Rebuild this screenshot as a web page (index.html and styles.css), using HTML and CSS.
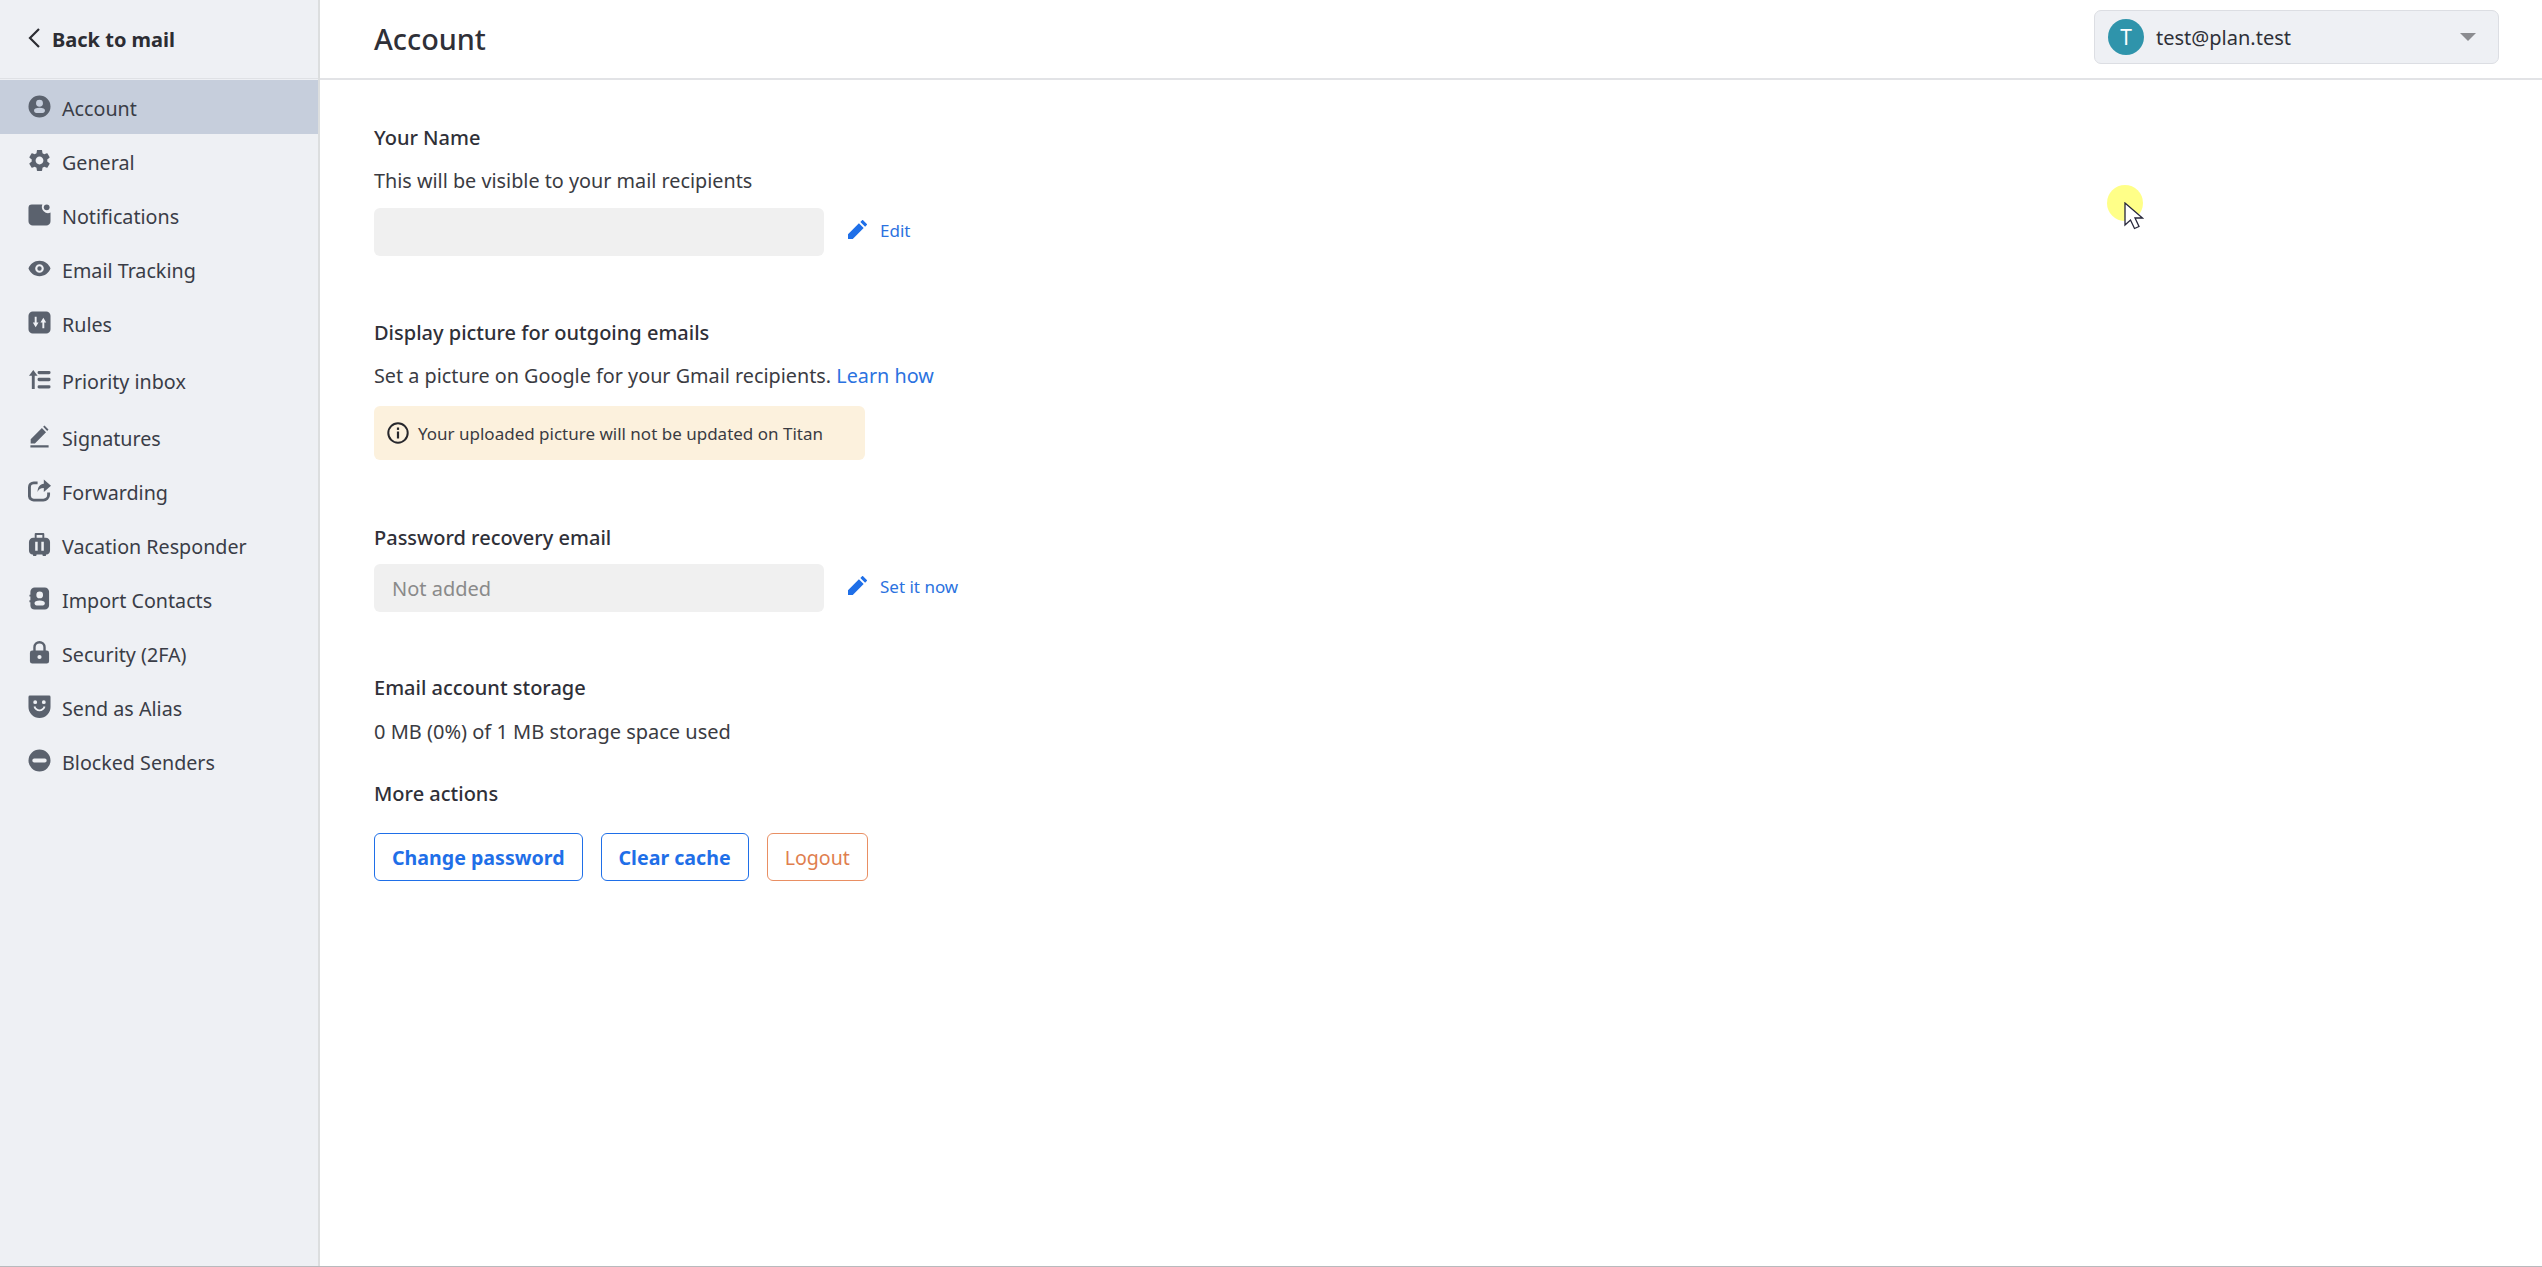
FILE: index.html
```html
<!DOCTYPE html>
<html lang="en">
<head>
<meta charset="utf-8">
<title>Account</title>
<link rel="stylesheet" href="styles.css">
</head>
<body>
<div class="app">
  <aside class="sidebar">
    <a class="back">
      <svg class="back-icon" viewBox="0 0 14 22"><path d="M12 2 3 11l9 9" fill="none" stroke="currentColor" stroke-width="2.2"/></svg>
      <span>Back to mail</span>
    </a>
    <nav class="nav">
      <a class="nav-item active"><svg class="ico" viewBox="0 0 24 24"><path fill-rule="evenodd" d="M12 .5a11.500 11.500 0 1 0 0 23 11.500 11.500 0 0 0 0-23zm0 4.500a3.600 3.600 0 1 1 0 7.200 3.600 3.600 0 0 1 0-7.200zM6.300 16.300c0-2 2-3 5.700-3s5.700 1 5.700 3c0 1.500-1 2.500-2.500 2.500H8.800c-1.500 0-2.500-1-2.500-2.500z"/></svg><span>Account</span></a>
      <a class="nav-item"><svg class="ico" viewBox="0 0 24 24"><path transform="translate(-1.600 -1.600) scale(1.133)" d="M19.140 12.940c.04-.3.06-.61.06-.94 0-.32-.02-.64-.07-.94l2.030-1.580c.18-.14.23-.41.12-.61l-1.920-3.320c-.12-.22-.37-.29-.59-.22l-2.390.96c-.5-.38-1.030-.7-1.620-.94l-.36-2.540c-.04-.24-.24-.41-.48-.41h-3.840c-.24 0-.43.17-.47.41l-.36 2.540c-.59.24-1.130.57-1.620.94l-2.390-.96c-.22-.08-.47 0-.59.22L2.740 8.870c-.12.21-.08.47.12.61l2.030 1.580c-.05.3-.09.63-.09.94s.02.64.07.94l-2.030 1.580c-.18.14-.23.41-.12.61l1.920 3.320c.12.22.37.29.59.22l2.390-.96c.5.38 1.030.7 1.620.94l.36 2.540c.05.24.24.41.48.41h3.840c.24 0 .44-.17.47-.41l.36-2.540c.59-.24 1.130-.56 1.620-.94l2.390.96c.22.08.47 0 .59-.22l1.920-3.320c.12-.22.07-.47-.12-.61l-2.010-1.580zM12 15.600c-1.980 0-3.600-1.620-3.600-3.600s1.620-3.600 3.600-3.600 3.600 1.620 3.600 3.600-1.620 3.600-3.600 3.600z"/></svg><span>General</span></a>
      <a class="nav-item"><svg class="ico" viewBox="0 0 24 24"><path d="M4 1.500h11a6.500 6.500 0 0 0 8.500 8.500V19a4.500 4.500 0 0 1-4.500 4.500H5A4.500 4.500 0 0 1 .5 19V5A3.500 3.500 0 0 1 4 1.500z"/><circle cx="19.500" cy="4.500" r="3"/></svg><span>Notifications</span></a>
      <a class="nav-item"><svg class="ico" viewBox="0 0 24 24"><path fill-rule="evenodd" d="M12 4C6.500 4 2.200 7.500.5 12c1.700 4.500 6 8 11.500 8s9.800-3.500 11.500-8C21.800 7.500 17.500 4 12 4zm0 3.500a4.500 4.500 0 1 1 0 9 4.500 4.500 0 0 1 0-9zm0 2.200a2.300 2.300 0 1 0 0 4.600 2.300 2.300 0 0 0 0-4.600z"/></svg><span>Email Tracking</span></a>
      <a class="nav-item"><svg class="ico" viewBox="0 0 24 24"><path fill-rule="evenodd" d="M5 .5h14A4.500 4.500 0 0 1 23.500 5v14a4.500 4.500 0 0 1-4.500 4.500H5A4.500 4.500 0 0 1 .5 19V5A4.500 4.500 0 0 1 5 .5zM7 6v6H5l3 5 3-5H9V6H7zm8 12h2v-6h2l-3-5-3 5h2v6z"/></svg><span>Rules</span></a>
      <a class="nav-item tall"><svg class="ico" viewBox="0 0 24 24"><path d="M5.500 2 10 8H7v14H4V8H1l4.500-6z"/><rect x="10" y="3" width="13.500" height="3.400" rx="1.500"/><rect x="10" y="10.300" width="13.500" height="3.400" rx="1.500"/><rect x="10" y="18" width="13.500" height="3.400" rx="1.500"/></svg><span>Priority inbox</span></a>
      <a class="nav-item"><svg class="ico" viewBox="0 0 24 24"><path d="M2.500 21.200h19V23.500h-19zM2.800 19.200v-4.400L14.500 3.200l4.300 4.300L7.200 19.200zM15.800 1.900l1.400-1.400 4.200 4.200-1.400 1.500z"/></svg><span>Signatures</span></a>
      <a class="nav-item"><svg class="ico" viewBox="0 0 24 24"><path fill="none" stroke="currentColor" stroke-width="3" d="M10 4H6a4.500 4.500 0 0 0-4.500 4.500V18A4.500 4.500 0 0 0 6 22h10a5.500 5.500 0 0 0 5.500-5.500V14"/><path d="M16.500.5 24 7l-7.500 6.500V9.500c-3.500 0-5.500 1.500-6.500 4 0-5 2.500-8 6.500-8.500z"/></svg><span>Forwarding</span></a>
      <a class="nav-item"><svg class="ico" viewBox="0 0 24 24"><path fill-rule="evenodd" d="M8 0h8a1 1 0 0 1 1 1v4h1.500a4.500 4.500 0 0 1 4.500 4.500V18a4.500 4.500 0 0 1-4 4.500l-.5 1.500h-3l-.5-1.500H9L8.500 24h-3L5 22.500A4.500 4.500 0 0 1 1 18V9.500A4.500 4.500 0 0 1 5.500 5H7V1a1 1 0 0 1 1-1zm1 2v3h6V2H9zM7.500 9v9.500h2.600V9H7.500zm6.400 0v9.500h2.600V9h-2.600z"/></svg><span>Vacation Responder</span></a>
      <a class="nav-item"><svg class="ico" viewBox="0 0 24 24"><path fill-rule="evenodd" d="M7 .5h10.500A4.500 4.500 0 0 1 22 5v14a4.500 4.500 0 0 1-4.500 4.500H7A4.500 4.500 0 0 1 2.500 19.200V16H1.500v-2.200h1V10h-1V8h1V5A4.500 4.500 0 0 1 7 .5zm5.200 4.300a3.500 3.500 0 1 0 0 7 3.500 3.500 0 0 0 0-7zM6.800 17c0-2 2-3 5.400-3s5.400 1 5.400 3c0 1.300-.9 2.200-2.200 2.200H9c-1.300 0-2.200-.9-2.200-2.200z"/></svg><span>Import Contacts</span></a>
      <a class="nav-item"><svg class="ico" viewBox="0 0 24 24"><path fill-rule="evenodd" d="M12 0a6.500 6.500 0 0 1 6.500 6.500V10h1a2.500 2.500 0 0 1 2.500 2.500V21a2.500 2.500 0 0 1-2.500 2.500h-15A2.500 2.500 0 0 1 2 21v-8.500A2.500 2.500 0 0 1 4.500 10h1V6.500A6.500 6.500 0 0 1 12 0zm0 2.500a4 4 0 0 0-4 4V10h8V6.500a4 4 0 0 0-4-4zm0 12a2.200 2.200 0 1 0 0 4.400 2.200 2.200 0 0 0 0-4.400z"/></svg><span>Security (2FA)</span></a>
      <a class="nav-item"><svg class="ico" viewBox="0 0 24 24"><path fill-rule="evenodd" d="M2 .5h20A1.500 1.500 0 0 1 23.500 2v10.500A11.500 11.500 0 0 1 .5 12.500V2A1.500 1.500 0 0 1 2 .5zM7.500 5.500a2 2 0 1 0 0 4 2 2 0 0 0 0-4zm9 0a2 2 0 1 0 0 4 2 2 0 0 0 0-4zM5.800 12.300c1 3 3.300 4.700 6.200 4.700s5.200-1.700 6.200-4.700l-1.900-.6c-.7 2.200-2.300 3.300-4.300 3.300s-3.600-1.100-4.300-3.300z"/></svg><span>Send as Alias</span></a>
      <a class="nav-item"><svg class="ico" viewBox="0 0 24 24"><path fill-rule="evenodd" d="M12 .5a11.500 11.500 0 1 0 0 23 11.500 11.500 0 0 0 0-23zM6.500 10h11a2 2 0 0 1 0 4h-11a2 2 0 0 1 0-4z"/></svg><span>Blocked Senders</span></a>
    </nav>
  </aside>

  <div class="main">
    <header class="topbar">
      <h1 class="title">Account</h1>
      <div class="account-select">
        <span class="avatar">T</span>
        <span class="account-email">test@plan.test</span>
        <span class="caret"></span>
      </div>
    </header>

    <main class="content">
      <section class="block block-name">
        <h2 class="heading">Your Name</h2>
        <p class="text">This will be visible to your mail recipients</p>
        <div class="field-row">
          <div class="field"></div>
          <a class="edit"><svg class="pencil" viewBox="0 0 20 20"><path d="M0 20v-5L11.500 3.500l5 5L5 20zM13 2l1.800-1.800a.8.8 0 0 1 1.100 0l3.900 3.900a.8.8 0 0 1 0 1.100L18 7z"/></svg><span>Edit</span></a>
        </div>
      </section>

      <section class="block block-picture">
        <h2 class="heading">Display picture for outgoing emails</h2>
        <p class="text">Set a picture on Google for your Gmail recipients. <a class="link">Learn how</a></p>
        <div class="notice">
          <svg class="info" viewBox="0 0 22 22"><circle cx="11" cy="11" r="9.700" fill="none" stroke="currentColor" stroke-width="2"/><rect x="9.900" y="9.500" width="2.200" height="7"/><rect x="9.900" y="5.500" width="2.200" height="2.400"/></svg>
          <span>Your uploaded picture will not be updated on Titan</span>
        </div>
      </section>

      <section class="block block-recovery">
        <h2 class="heading">Password recovery email</h2>
        <div class="field-row field-row-tight">
          <div class="field field-muted">Not added</div>
          <a class="edit"><svg class="pencil" viewBox="0 0 20 20"><path d="M0 20v-5L11.500 3.500l5 5L5 20zM13 2l1.800-1.800a.8.8 0 0 1 1.100 0l3.900 3.900a.8.8 0 0 1 0 1.100L18 7z"/></svg><span>Set it now</span></a>
        </div>
      </section>

      <section class="block block-storage">
        <h2 class="heading">Email account storage</h2>
        <p class="text">0 MB (0%) of 1 MB storage space used</p>
      </section>

      <section class="block block-actions">
        <h2 class="heading">More actions</h2>
        <div class="actions">
          <button class="btn">Change password</button>
          <button class="btn">Clear cache</button>
          <button class="btn btn-danger">Logout</button>
        </div>
      </section>
    </main>
  </div>
</div>

<div class="pointer">
  <svg class="pointer-arrow" viewBox="0 0 20 28"><path d="M1 1v22l5.500-5 4 8.500 4.500-2-4-8.500h7.500z" fill="#fff" stroke="#26263a" stroke-width="1.300"/></svg>
</div>
</body>
</html>
```

FILE: styles.css
```css
* { box-sizing: border-box; }
html, body { height: 100%; }
body {
  margin: 0;
  background: #fff;
  color: #2f3038;
  font-family: "Noto Sans", "Open Sans", sans-serif;
  font-size: 19.800px;
  overflow: hidden;
}
.app {
  display: flex;
  height: 1267px;
  border-bottom: 1px solid #b8babd;
}
.sidebar {
  width: 320px;
  flex: none;
  background: #eef0f4;
  border-right: 2px solid #dcdedf;
}
.back {
  display: flex;
  align-items: center;
  gap: 11px;
  height: 79px;
  padding-left: 27px;
  border-bottom: 1px solid #dfe1e5;
  font-weight: 700;
  font-size: 20px;
  color: #2c2d33;
}
.back-icon { width: 14px; height: 22px; margin-top: -3px; }
.nav { display: flex; flex-direction: column; padding-top: 1px; }
.nav-item {
  display: flex;
  align-items: center;
  gap: 11px;
  height: 54px;
  padding: 2px 0 0 28px;
  font-size: 19.700px;
  color: #3a3d47;
}
.nav-item.tall { height: 60px; }
.nav-item.active { background: #c6cedc; }
.ico {
  width: 23px;
  height: 23px;
  flex: none;
  margin-top: -3px;
  fill: #5b626e;
  color: #5b626e;
}
.main { flex: 1; min-width: 0; }
.topbar {
  display: flex;
  align-items: center;
  justify-content: space-between;
  height: 80px;
  padding: 0 43px 0 54px;
  border-bottom: 2px solid #e2e3e6;
}
.title { margin: 0 0 1px; font-size: 28.800px; font-weight: 500; color: #2f3038; }
.account-select {
  display: flex;
  align-items: center;
  width: 405px;
  height: 54px;
  margin-top: -5px;
  padding: 0 22px 0 13px;
  background: #eef0f4;
  border: 1px solid #dcdee3;
  border-radius: 7px;
}
.avatar {
  display: flex;
  align-items: center;
  justify-content: center;
  width: 36px;
  height: 36px;
  border-radius: 50%;
  background: #2f94ab;
  color: #fff;
  font-size: 21px;
}
.account-email { flex: 1; margin: 2px 0 0 12px; font-size: 20px; }
.caret {
  width: 0;
  height: 0;
  border-left: 8px solid transparent;
  border-right: 8px solid transparent;
  border-top: 8px solid #8b8c90;
}
.content { padding: 0 0 0 54px; }
.block { display: flex; flex-direction: column; align-items: flex-start; }
.heading { margin: 0; font-size: 20px; font-weight: 500; line-height: 28px; color: #2f3038; }
.text { margin: 0; line-height: 28px; color: #3a3b42; }
.link { color: #2b72e0; }
.block-name { padding-top: 44px; }
.block-name .text { margin-top: 15px; }
.field-row { display: flex; align-items: center; margin-top: 13px; }
.field-row-tight { margin-top: 12px; }
.field {
  width: 450px;
  height: 48px;
  padding: 0 18px;
  display: flex;
  align-items: center;
  background: #f0f0f0;
  border-radius: 6px;
}
.field-muted { color: #8a8a8a; font-size: 20px; }
.edit {
  display: flex;
  align-items: center;
  gap: 13px;
  margin: -3px 0 0 24px;
  font-size: 17px;
  color: #2b72e0;
}
.pencil { width: 19px; height: 19px; fill: #1f6fe8; margin-top: -2px; }
.block-picture { padding-top: 63px; }
.block-picture .text { margin-top: 15px; }
.notice {
  display: flex;
  align-items: center;
  gap: 9px;
  height: 54px;
  width: 491px;
  margin-top: 16px;
  padding-left: 13px;
  background: #fcf1dd;
  border-radius: 6px;
  font-size: 17px;
  color: #3a3b42;
}
.info { width: 22px; height: 22px; flex: none; color: #26272c; fill: currentColor; }
.block-recovery { padding-top: 64px; }
.block-storage { padding-top: 62px; }
.block-storage .text { margin-top: 16px; font-size: 20px; }
.block-actions { padding-top: 34px; }
.actions { display: flex; gap: 18px; margin-top: 25px; }
.btn {
  height: 48px;
  padding: 0 17px;
  background: #fff;
  border: 1.500px solid #1f6fe8;
  border-radius: 6px;
  font: 700 19.600px "Noto Sans", "Open Sans", sans-serif;
  color: #1f6fe8;
}
.btn-danger {
  border-color: #e98f63;
  color: #df7f4f;
  font-weight: 400;
}
.pointer {
  position: absolute;
  left: 2107px;
  top: 185px;
  width: 36px;
  height: 36px;
  border-radius: 50%;
  background: #ffff88;
}
.pointer-arrow {
  position: absolute;
  left: 17px;
  top: 17px;
  width: 20px;
  height: 28px;
}
```
